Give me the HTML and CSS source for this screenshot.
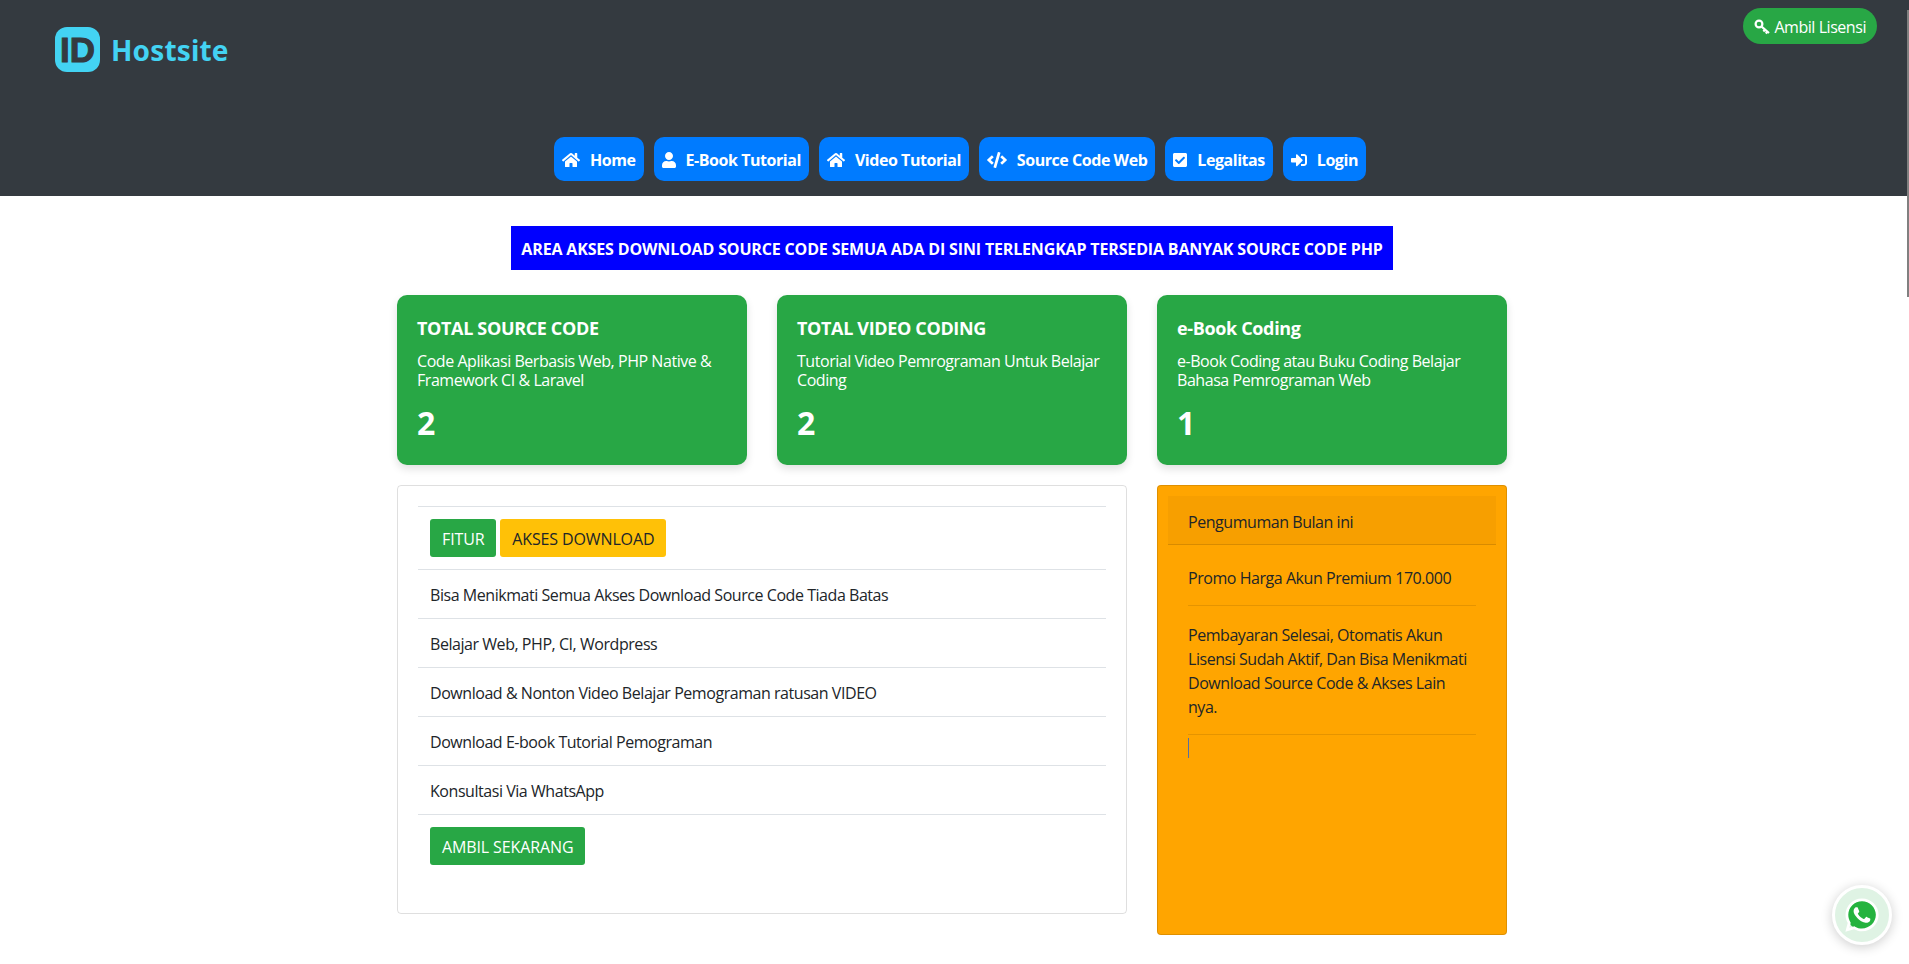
FILE: index.html
```html
<!DOCTYPE html>
<html lang="en">
  <head>
    <meta charset="UTF-8" />
    <meta name="viewport" content="width=device-width, initial-scale=1.0" />
    <title>Hostsite</title>
    <link rel="stylesheet" href="styles.css">
  </head>
  <body>
    <header class="header">
      <div class="header-top">
        <a href="#" class="logo">
          <span class="logo-mark">ID</span>
          <span class="logo-text">Hostsite</span>
        </a>
        <a href="#" class="pill">
          <svg class="key-icon" viewBox="0 0 16 16"><circle cx="5" cy="5" r="3.4" fill="none" stroke="#fff" stroke-width="2.2"/><path d="M7.6 7.6L15 14M11 10.6L9.4 12.4M13.4 12.6L11.8 14.4" fill="none" stroke="#fff" stroke-width="2.2"/></svg>
          Ambil Lisensi
        </a>
      </div>
      <nav class="nav">
        <a href="#" class="nav-btn">
          <svg class="icon" viewBox="0 0 576 512"><path d="M280.37 148.26L96 300.11V464a16 16 0 0 0 16 16l112.06-.29a16 16 0 0 0 15.92-16V368a16 16 0 0 1 16-16h64a16 16 0 0 1 16 16v95.64a16 16 0 0 0 16 16.05L464 480a16 16 0 0 0 16-16V300L295.67 148.26a12.19 12.19 0 0 0-15.3 0zM571.6 251.47L488 182.56V44.05a12 12 0 0 0-12-12h-56a12 12 0 0 0-12 12v72.61L318.47 43a48 48 0 0 0-61 0L4.34 251.47a12 12 0 0 0-1.6 16.9l25.5 31A12 12 0 0 0 45.15 301l235.22-193.74a12.19 12.19 0 0 1 15.3 0L530.9 301a12 12 0 0 0 16.9-1.6l25.5-31a12 12 0 0 0-1.7-16.93z"/></svg>
          Home
        </a>
        <a href="#" class="nav-btn">
          <svg class="icon" viewBox="0 0 448 512"><path d="M224 256c70.7 0 128-57.3 128-128S294.7 0 224 0 96 57.3 96 128s57.3 128 128 128zm89.6 32h-16.7c-22.2 10.2-46.9 16-72.9 16s-50.6-5.8-72.9-16h-16.7C60.2 288 0 348.2 0 422.4V464c0 26.5 21.5 48 48 48h352c26.5 0 48-21.5 48-48v-41.6c0-74.2-60.2-134.4-134.4-134.4z"/></svg>
          E-Book Tutorial
        </a>
        <a href="#" class="nav-btn">
          <svg class="icon" viewBox="0 0 576 512"><path d="M280.37 148.26L96 300.11V464a16 16 0 0 0 16 16l112.06-.29a16 16 0 0 0 15.92-16V368a16 16 0 0 1 16-16h64a16 16 0 0 1 16 16v95.64a16 16 0 0 0 16 16.05L464 480a16 16 0 0 0 16-16V300L295.67 148.26a12.19 12.19 0 0 0-15.3 0zM571.6 251.47L488 182.56V44.05a12 12 0 0 0-12-12h-56a12 12 0 0 0-12 12v72.61L318.47 43a48 48 0 0 0-61 0L4.34 251.47a12 12 0 0 0-1.6 16.9l25.5 31A12 12 0 0 0 45.15 301l235.22-193.74a12.19 12.19 0 0 1 15.3 0L530.9 301a12 12 0 0 0 16.9-1.6l25.5-31a12 12 0 0 0-1.7-16.93z"/></svg>
          Video Tutorial
        </a>
        <a href="#" class="nav-btn">
          <svg class="icon" viewBox="0 0 640 512"><path d="M278.9 511.5l-61-17.7c-6.4-1.8-10-8.5-8.2-14.9L346.2 8.7c1.8-6.4 8.5-10 14.9-8.2l61 17.7c6.4 1.8 10 8.5 8.2 14.9L293.8 503.3c-1.9 6.4-8.5 10.1-14.9 8.2zm-114-112.2l43.5-46.4c4.6-4.9 4.3-12.7-.8-17.2L117 256l90.6-79.7c5.1-4.5 5.5-12.3.8-17.2l-43.5-46.4c-4.5-4.8-12.1-5.1-17-.5L3.8 247.2c-5.1 4.7-5.1 12.8 0 17.5l144.1 135.1c4.9 4.6 12.5 4.4 17-.5zm327.2.6l144.1-135.1c5.1-4.7 5.1-12.8 0-17.5L492.1 112.1c-4.8-4.5-12.4-4.3-17 .5L431.6 159c-4.6 4.9-4.3 12.7.8 17.2L523 256l-90.6 79.7c-5.1 4.5-5.5 12.3-.8 17.2l43.5 46.4c4.5 4.9 12.1 5.1 17 .6z"/></svg>
          Source Code Web
        </a>
        <a href="#" class="nav-btn">
          <svg class="icon" viewBox="0 0 448 512"><path d="M400 480H48c-26.51 0-48-21.49-48-48V80c0-26.51 21.49-48 48-48h352c26.51 0 48 21.49 48 48v352c0 26.51-21.49 48-48 48zm-204.686-98.059l184-184c6.248-6.248 6.248-16.379 0-22.627l-22.627-22.627c-6.248-6.248-16.379-6.249-22.628 0L184 302.745l-70.059-70.059c-6.248-6.248-16.379-6.248-22.628 0l-22.627 22.627c-6.248 6.248-6.248 16.379 0 22.627l104 104c6.249 6.25 16.379 6.25 22.628.001z"/></svg>
          Legalitas
        </a>
        <a href="#" class="nav-btn">
          <svg class="icon" viewBox="0 0 512 512"><path d="M416 448h-84c-6.6 0-12-5.4-12-12v-40c0-6.6 5.4-12 12-12h84c17.7 0 32-14.3 32-32V160c0-17.7-14.3-32-32-32h-84c-6.6 0-12-5.4-12-12V76c0-6.6 5.4-12 12-12h84c53 0 96 43 96 96v192c0 53-43 96-96 96zm-47-201L201 79c-15-15-41-4.5-41 17v96H24c-13.3 0-24 10.7-24 24v96c0 13.3 10.7 24 24 24h136v96c0 21.5 26 32 41 17l168-168c9.3-9.4 9.3-24.6 0-34z"/></svg>
          Login
        </a>
      </nav>
    </header>

    <main class="container">
      <div class="banner-row">
        <h1 class="banner">AREA AKSES DOWNLOAD SOURCE CODE SEMUA ADA DI SINI TERLENGKAP TERSEDIA BANYAK SOURCE CODE PHP</h1>
      </div>

      <section class="stats">
        <div class="stat-card">
          <h5>TOTAL SOURCE CODE</h5>
          <p>Code Aplikasi Berbasis Web, PHP Native &amp; Framework CI &amp; Laravel</p>
          <h2>2</h2>
        </div>
        <div class="stat-card">
          <h5>TOTAL VIDEO CODING</h5>
          <p>Tutorial Video Pemrograman Untuk Belajar Coding</p>
          <h2>2</h2>
        </div>
        <div class="stat-card">
          <h5>e-Book Coding</h5>
          <p>e-Book Coding atau Buku Coding Belajar Bahasa Pemrograman Web</p>
          <h2>1</h2>
        </div>
      </section>

      <section class="columns">
        <div class="panel">
          <table class="table">
            <tr class="btn-row"><td><a href="#" class="btn btn-green">FITUR</a> <a href="#" class="btn btn-yellow">AKSES DOWNLOAD</a></td></tr>
            <tr><td>Bisa Menikmati Semua Akses Download Source Code Tiada Batas</td></tr>
            <tr><td>Belajar Web, PHP, CI, Wordpress</td></tr>
            <tr><td>Download &amp; Nonton Video Belajar Pemograman ratusan VIDEO</td></tr>
            <tr><td>Download E-book Tutorial Pemograman</td></tr>
            <tr><td>Konsultasi Via WhatsApp</td></tr>
            <tr class="btn-row"><td><a href="#" class="btn btn-green">AMBIL SEKARANG</a></td></tr>
          </table>
        </div>

        <aside class="notice">
          <div class="notice-head">Pengumuman Bulan ini</div>
          <div class="notice-body">
            <p>Promo Harga Akun Premium 170.000</p>
            <hr />
            <p>Pembayaran Selesai, Otomatis Akun Lisensi Sudah Aktif, Dan Bisa Menikmati Download Source Code &amp; Akses Lain nya.</p>
            <hr />
            <div class="caret"></div>
          </div>
        </aside>
      </section>
    </main>

    <a href="#" class="wa">
      <svg viewBox="0 0 448 512"><circle cx="224" cy="254" r="205" fill="#25b33f"/><path fill="#fff" d="M380.9 97.1C339 55.1 283.2 32 223.9 32c-122.4 0-222 99.6-222 222 0 39.1 10.2 77.3 29.6 111L0 480l117.7-30.9c32.4 17.7 68.9 27 106.1 27h.1c122.3 0 224.1-99.6 224.1-222 0-59.3-25.2-115-67.1-157zm-157 341.6c-33.2 0-65.7-8.9-94-25.7l-6.7-4-69.8 18.3L72 359.2l-4.4-7c-18.5-29.4-28.2-63.3-28.2-98.2 0-101.7 82.8-184.5 184.6-184.5 49.3 0 95.6 19.2 130.4 54.1 34.8 34.9 56.2 81.2 56.1 130.5 0 101.8-84.9 184.6-186.6 184.6zm101.2-138.2c-5.5-2.8-32.8-16.2-37.9-18-5.1-1.9-8.8-2.8-12.5 2.8-3.7 5.6-14.3 18-17.6 21.8-3.2 3.7-6.5 4.2-12 1.4-32.6-16.3-54-29.1-75.5-66-5.7-9.8 5.7-9.1 16.3-30.3 1.8-3.7.9-6.9-.5-9.7-1.4-2.8-12.5-30.1-17.1-41.2-4.5-10.8-9.1-9.3-12.5-9.5-3.2-.2-6.9-.2-10.6-.2-3.7 0-9.7 1.4-14.8 6.9-5.1 5.6-19.4 19-19.4 46.3 0 27.3 19.9 53.7 22.6 57.4 2.8 3.7 39.1 59.7 94.8 83.8 35.2 15.2 49 16.5 66.6 13.9 10.7-1.6 32.8-13.4 37.4-26.4 4.6-13 4.6-24.1 3.2-26.4-1.3-2.5-5-3.9-10.5-6.6z"/></svg>
    </a>
    <div class="scroll-thumb"></div>
  </body>
</html>
```

FILE: styles.css
```css
* {
  box-sizing: border-box;
}
html,
body {
  height: 100%;
}
body {
  margin: 0;
  overflow: hidden;
  background-color: #fff;
  color: #212529;
  font-family: "Open Sans", "Noto Sans", Arial, sans-serif;
  font-size: 16px;
  line-height: 24px;
  letter-spacing: -0.45px;
}
a {
  text-decoration: none;
}
.header {
  height: 196px;
  background-color: #343a40;
  display: flex;
  flex-direction: column;
}
.header-top {
  height: 137px;
  display: flex;
  justify-content: space-between;
  align-items: flex-start;
  padding: 0 32px 0 55px;
}
.logo {
  margin-top: 27px;
  display: flex;
  align-items: center;
  gap: 11px;
}
.logo-mark {
  width: 45px;
  height: 45px;
  border-radius: 12px;
  background-color: #43d3f3;
  color: #343a40;
  font-family: "Liberation Sans", sans-serif;
  font-weight: 700;
  font-size: 35px;
  line-height: 45px;
  letter-spacing: 0;
  text-align: center;
  -webkit-text-stroke: 1px #343a40;
}
.logo-text {
  color: #43d3f3;
  font-family: "Noto Sans", sans-serif;
  font-weight: 700;
  font-size: 28px;
  letter-spacing: 0.15px;
}
.pill {
  margin-top: 8px;
  height: 36px;
  padding: 7px 11px 5px;
  border-radius: 18px;
  background-color: #28a745;
  color: #fff;
  display: flex;
  align-items: center;
  gap: 4px;
}
.key-icon {
  width: 16px;
  height: 16px;
}
.nav {
  display: flex;
  justify-content: center;
  gap: 10px;
  padding-left: 11px;
}
.nav-btn {
  height: 44px;
  padding: 11px 8px 9px;
  border-radius: 10px;
  background-color: #007bff;
  color: #fff;
  font-weight: 700;
  display: flex;
  align-items: center;
  gap: 10px;
}
.icon {
  height: 16px;
  fill: #fff;
}
.container {
  width: 1110px;
  margin-left: 397px;
}
.banner-row {
  padding-top: 30px;
  display: flex;
  justify-content: center;
}
.banner {
  margin: 0;
  padding: 11px 10px 9px;
  background-color: #00f;
  color: #fff;
  font-size: 16px;
  font-weight: 700;
  line-height: 24px;
  letter-spacing: -0.16px;
}
.stats {
  margin-top: 25px;
  display: grid;
  grid-template-columns: repeat(3, 350px);
  gap: 30px;
}
.stat-card {
  height: 170px;
  padding: 21px 20px;
  border-radius: 10px;
  background-color: #28a745;
  color: #fff;
  box-shadow: 0 4px 8px rgba(0, 0, 0, 0.12);
}
.stat-card h5 {
  margin: 0 0 12px;
  font-size: 18px;
  line-height: 24px;
  font-weight: 700;
  letter-spacing: -0.35px;
}
.stat-card p {
  margin: 0 0 14px;
  line-height: 19.2px;
}
.stat-card h2 {
  margin: 0;
  font-size: 32px;
  line-height: 38px;
  font-weight: 700;
}
.columns {
  margin-top: 20px;
  display: grid;
  grid-template-columns: 730px 350px;
  gap: 30px;
  align-items: start;
}
.panel {
  height: 429px;
  padding: 20px;
  border: 1px solid rgba(0, 0, 0, 0.125);
  border-radius: 4px;
}
.table {
  width: 100%;
  border-collapse: collapse;
}
.table td {
  padding: 13px 12px 11px;
  border-top: 1px solid #dee2e6;
}
.table .btn-row td {
  padding: 12px;
}
.btn {
  display: inline-block;
  padding: 8px 12px 6px;
  border-radius: 3px;
  line-height: 24px;
  letter-spacing: -0.12px;
}
.btn-green {
  background-color: #28a745;
  color: #fff;
}
.btn-yellow {
  background-color: #ffc107;
  color: #212529;
}
.notice {
  height: 450px;
  padding: 10px;
  border: 1px solid rgba(0, 0, 0, 0.125);
  border-radius: 4px;
  background-color: #ffa500;
}
.notice-head {
  padding: 14px 20px 10px;
  background-color: rgba(0, 0, 0, 0.03);
  border-bottom: 1px solid rgba(0, 0, 0, 0.125);
}
.notice-body {
  padding: 21px 20px 20px;
}
.notice-body p {
  margin: 0;
}
.notice-body hr {
  margin: 15px 0 17px;
  border: 0;
  border-top: 1px solid rgba(0, 0, 0, 0.1);
}
.notice-body hr:last-of-type {
  margin-bottom: 3px;
}
.caret {
  width: 1px;
  height: 20px;
  background-color: #5a6fa0;
}
.wa {
  position: fixed;
  right: 17px;
  bottom: 19px;
  width: 60px;
  height: 60px;
  border: 3px solid #fff;
  border-radius: 50%;
  background-color: #dff3e4;
  box-shadow: 0 2px 12px rgba(0, 0, 0, 0.2);
  display: flex;
  align-items: center;
  justify-content: center;
}
.wa svg {
  width: 34px;
  height: 38px;
}
.scroll-thumb {
  position: fixed;
  top: 10px;
  right: 0;
  width: 2px;
  height: 287px;
  background-color: #808080;
}
```
